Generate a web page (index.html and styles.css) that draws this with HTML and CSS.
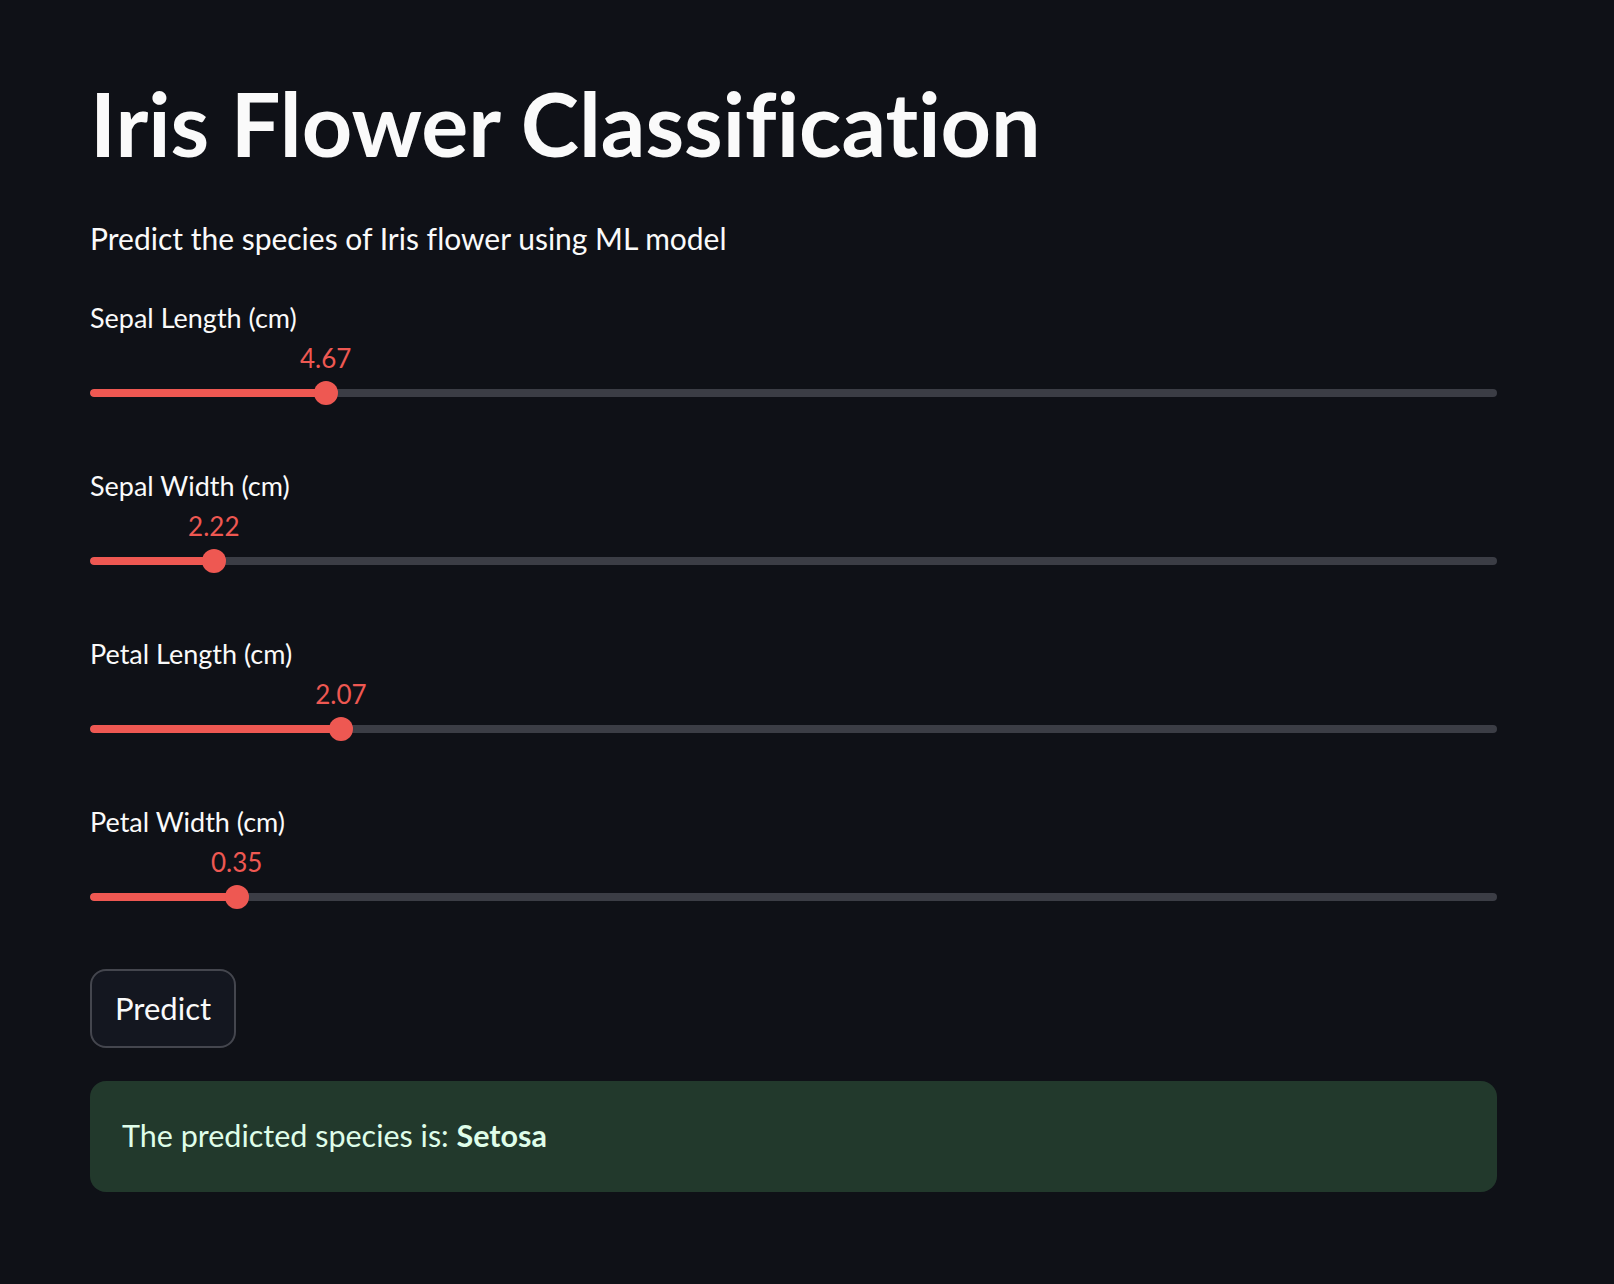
FILE: index.html
```html
<!DOCTYPE html>
<html lang="en">
<head>
<meta charset="utf-8">
<title>Iris Flower Classification</title>
<link rel="stylesheet" href="styles.css">
</head>
<body>
<main class="main">
  <h1 class="title">Iris Flower Classification</h1>
  <p class="subtitle">Predict the species of Iris flower using ML model</p>

  <div class="slider">
    <div class="slider-label">Sepal Length (cm)</div>
    <div class="slider-body">
      <div class="value-row"><span class="value" style="left:16.75%">4.67</span></div>
      <div class="track-wrap">
        <div class="track"><div class="fill" style="width:16.75%"></div></div>
        <div class="thumb" style="left:16.75%"></div>
      </div>
    </div>
  </div>

  <div class="slider">
    <div class="slider-label">Sepal Width (cm)</div>
    <div class="slider-body">
      <div class="value-row"><span class="value" style="left:8.8%">2.22</span></div>
      <div class="track-wrap">
        <div class="track"><div class="fill" style="width:8.8%"></div></div>
        <div class="thumb" style="left:8.8%"></div>
      </div>
    </div>
  </div>

  <div class="slider">
    <div class="slider-label">Petal Length (cm)</div>
    <div class="slider-body">
      <div class="value-row"><span class="value" style="left:17.83%">2.07</span></div>
      <div class="track-wrap">
        <div class="track"><div class="fill" style="width:17.83%"></div></div>
        <div class="thumb" style="left:17.83%"></div>
      </div>
    </div>
  </div>

  <div class="slider">
    <div class="slider-label">Petal Width (cm)</div>
    <div class="slider-body">
      <div class="value-row"><span class="value" style="left:10.42%">0.35</span></div>
      <div class="track-wrap">
        <div class="track"><div class="fill" style="width:10.42%"></div></div>
        <div class="thumb" style="left:10.42%"></div>
      </div>
    </div>
  </div>

  <button class="btn" type="button">Predict</button>

  <div class="alert">The predicted species is: <strong>Setosa</strong></div>
</main>
</body>
</html>
```

FILE: styles.css
```css
html, body {
  margin: 0;
  padding: 0;
  background: #0f1117;
}

body {
  font-family: Lato, "Noto Sans", "Liberation Sans", sans-serif;
  font-variant-ligatures: none;
  color: #fafafa;
  min-height: 1284px;
}

.main {
  width: 1407px;
  padding: 71px 0 0 90px;
  display: flex;
  flex-direction: column;
  align-items: flex-start;
}

.title {
  margin: 0;
  font-size: 88px;
  line-height: 1.2;
  font-weight: 700;
  color: #fafafa;
}

.subtitle {
  margin: 37px 0 0;
  font-size: 30px;
  line-height: 48px;
  font-weight: 400;
}

.slider {
  width: 100%;
  margin-top: 35px;
  display: flex;
  flex-direction: column;
}

.slider + .slider {
  margin-top: 60px;
}

.slider-label {
  font-size: 27px;
  line-height: 42px;
  color: #fafafa;
}

.slider-body {
  width: 100%;
}

.value-row {
  position: relative;
  height: 28px;
  margin-top: 5px;
}

.value {
  position: absolute;
  top: 0;
  transform: translateX(-50%);
  font-size: 26px;
  line-height: 28px;
  color: #ee5852;
  white-space: nowrap;
}

.track-wrap {
  position: relative;
  height: 24px;
  margin-top: 9px;
  display: flex;
  align-items: center;
}

.track {
  width: 100%;
  height: 8px;
  border-radius: 4px;
  background: #3b3d45;
  overflow: hidden;
}

.fill {
  height: 100%;
  background: #ee5852;
  border-radius: 4px 0 0 4px;
}

.thumb {
  position: absolute;
  top: 0;
  width: 24px;
  height: 24px;
  border-radius: 50%;
  background: #ee5852;
  transform: translateX(-50%);
}

.btn {
  margin-top: 60px;
  height: 79px;
  padding: 0 23px;
  border: 2px solid #44464e;
  border-radius: 16px;
  background: #141720;
  color: #fafafa;
  font-family: Lato, "Noto Sans", "Liberation Sans", sans-serif;
  font-variant-ligatures: none;
  font-size: 31px;
  line-height: 48px;
  display: flex;
  align-items: center;
}

.alert {
  box-sizing: border-box;
  width: 100%;
  margin-top: 33px;
  height: 111px;
  padding: 30px 32px 33px;
  border-radius: 16px;
  background: #22392c;
  color: #dffde9;
  font-size: 30.5px;
  line-height: 48px;
}

.alert strong {
  font-weight: 700;
}
```
